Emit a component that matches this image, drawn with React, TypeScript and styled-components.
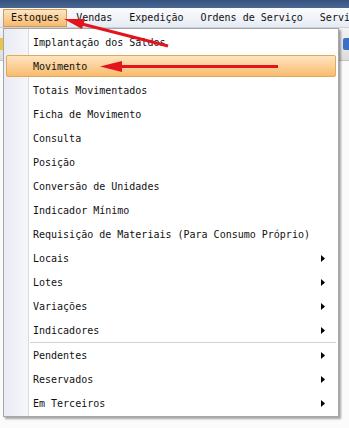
import * as React from "react";
import styled, { createGlobalStyle } from "styled-components";

const GlobalStyle = createGlobalStyle`
  html, body {
    margin: 0;
    padding: 0;
    background: #fbfbfb;
  }
  body {
    font-family: "DejaVu Sans Mono", "Liberation Mono", monospace;
    font-size: 10px;
    color: #111;
  }
`;

const Page = styled.div`
  position: relative;
  width: 349px;
  height: 428px;
  overflow: hidden;
  display: flex;
  flex-direction: column;
`;

const TitleStrip = styled.div`
  height: 8px;
  background: linear-gradient(#35527f, #4b6894);
`;

const MenuBar = styled.div`
  height: 20px;
  display: flex;
  align-items: center;
  gap: 1px;
  padding-left: 3px;
  background: linear-gradient(#fbfcfe, #e6ebf3);
  border-bottom: 1px solid #c9d1dd;
  box-sizing: border-box;
  white-space: nowrap;
  overflow: hidden;
`;

const BarItem = styled.div<{ $open?: boolean }>`
  height: 18px;
  display: flex;
  align-items: center;
  padding: 0 7px;
  border: 1px solid ${(p) => (p.$open ? "#d69a4f" : "transparent")};
  box-sizing: border-box;
  background: ${(p) =>
    p.$open ? "linear-gradient(#fde6c4, #f7b96c)" : "transparent"};
`;

const Toolbar = styled.div`
  height: 32px;
  display: flex;
  justify-content: space-between;
  align-items: center;
  background: linear-gradient(#f3f3f3, #dcdcdc);
  border-bottom: 1px solid #c4c4c4;
`;

const ToolIcon = styled.div<{ $tone: string }>`
  width: 12px;
  height: 12px;
  margin: 0 -6px;
  border-radius: 2px;
  background: ${(p) => p.$tone};
`;

const Dropdown = styled.div`
  position: absolute;
  top: 28px;
  left: 3px;
  width: 336px;
  padding: 1px 0;
  display: flex;
  flex-direction: column;
  border: 1px solid #a7a7a7;
  box-sizing: border-box;
  box-shadow: 2px 2px 2px rgba(0, 0, 0, 0.35);
  background: linear-gradient(
    to right,
    #e9ecf3 0px,
    #f5f6f9 24px,
    #dadce2 24px,
    #dadce2 25px,
    #ffffff 25px,
    #ffffff 100%
  );
`;

const Item = styled.div<{ $active?: boolean }>`
  height: 22px;
  flex: none;
  margin: 1px 2px;
  padding: 0 10px 0 26px;
  display: flex;
  align-items: center;
  justify-content: space-between;
  border: 1px solid ${(p) => (p.$active ? "#e0a95e" : "transparent")};
  border-radius: 2px;
  box-sizing: border-box;
  white-space: nowrap;
  background: ${(p) =>
    p.$active ? "linear-gradient(#fde5c1, #f8bb6d)" : "transparent"};
`;

const Separator = styled.div`
  height: 1px;
  flex: none;
  margin-left: 26px;
  margin-right: 2px;
  background: #d2d2d2;
`;

const Overlay = styled.svg`
  position: absolute;
  left: 0;
  top: 0;
  pointer-events: none;
`;

const SubArrow = () => (
  <svg width="4" height="7" viewBox="0 0 4 7">
    <polygon points="0,0 4,3.5 0,7" fill="#000" />
  </svg>
);

const topItems = [
  "Implantação dos Saldos",
  "Movimento",
  "Totais Movimentados",
  "Ficha de Movimento",
  "Consulta",
  "Posição",
  "Conversão de Unidades",
  "Indicador Mínimo",
  "Requisição de Materiais (Para Consumo Próprio)",
];

const subItems = ["Locais", "Lotes", "Variações", "Indicadores"];
const lowerItems = ["Pendentes", "Reservados", "Em Terceiros"];

const App: React.FC = () => (
  <Page>
    <GlobalStyle />
    <TitleStrip />
    <MenuBar>
      <BarItem $open>Estoques</BarItem>
      <BarItem>Vendas</BarItem>
      <BarItem>Expedição</BarItem>
      <BarItem>Ordens de Serviço</BarItem>
      <BarItem>Servi</BarItem>
    </MenuBar>
    <Toolbar>
      <ToolIcon $tone="#e8c54a" />
      <ToolIcon $tone="#3d6fc4" />
    </Toolbar>

    <Dropdown>
      {topItems.map((label) => (
        <Item key={label} $active={label === "Movimento"}>
          {label}
        </Item>
      ))}
      {subItems.map((label) => (
        <Item key={label}>
          {label}
          <SubArrow />
        </Item>
      ))}
      <Separator />
      {lowerItems.map((label) => (
        <Item key={label}>
          {label}
          <SubArrow />
        </Item>
      ))}
    </Dropdown>

    <Overlay width="349" height="428" viewBox="0 0 349 428">
      <line x1="82" y1="24" x2="168" y2="46" stroke="#e3141b" strokeWidth="3" />
      <polygon points="64,19 82,29 85,19" fill="#e3141b" />
      <line x1="118" y1="66.5" x2="278" y2="66.5" stroke="#e3141b" strokeWidth="3" />
      <polygon points="100,66.5 122,61 122,72" fill="#e3141b" />
    </Overlay>
  </Page>
);

export default App;
